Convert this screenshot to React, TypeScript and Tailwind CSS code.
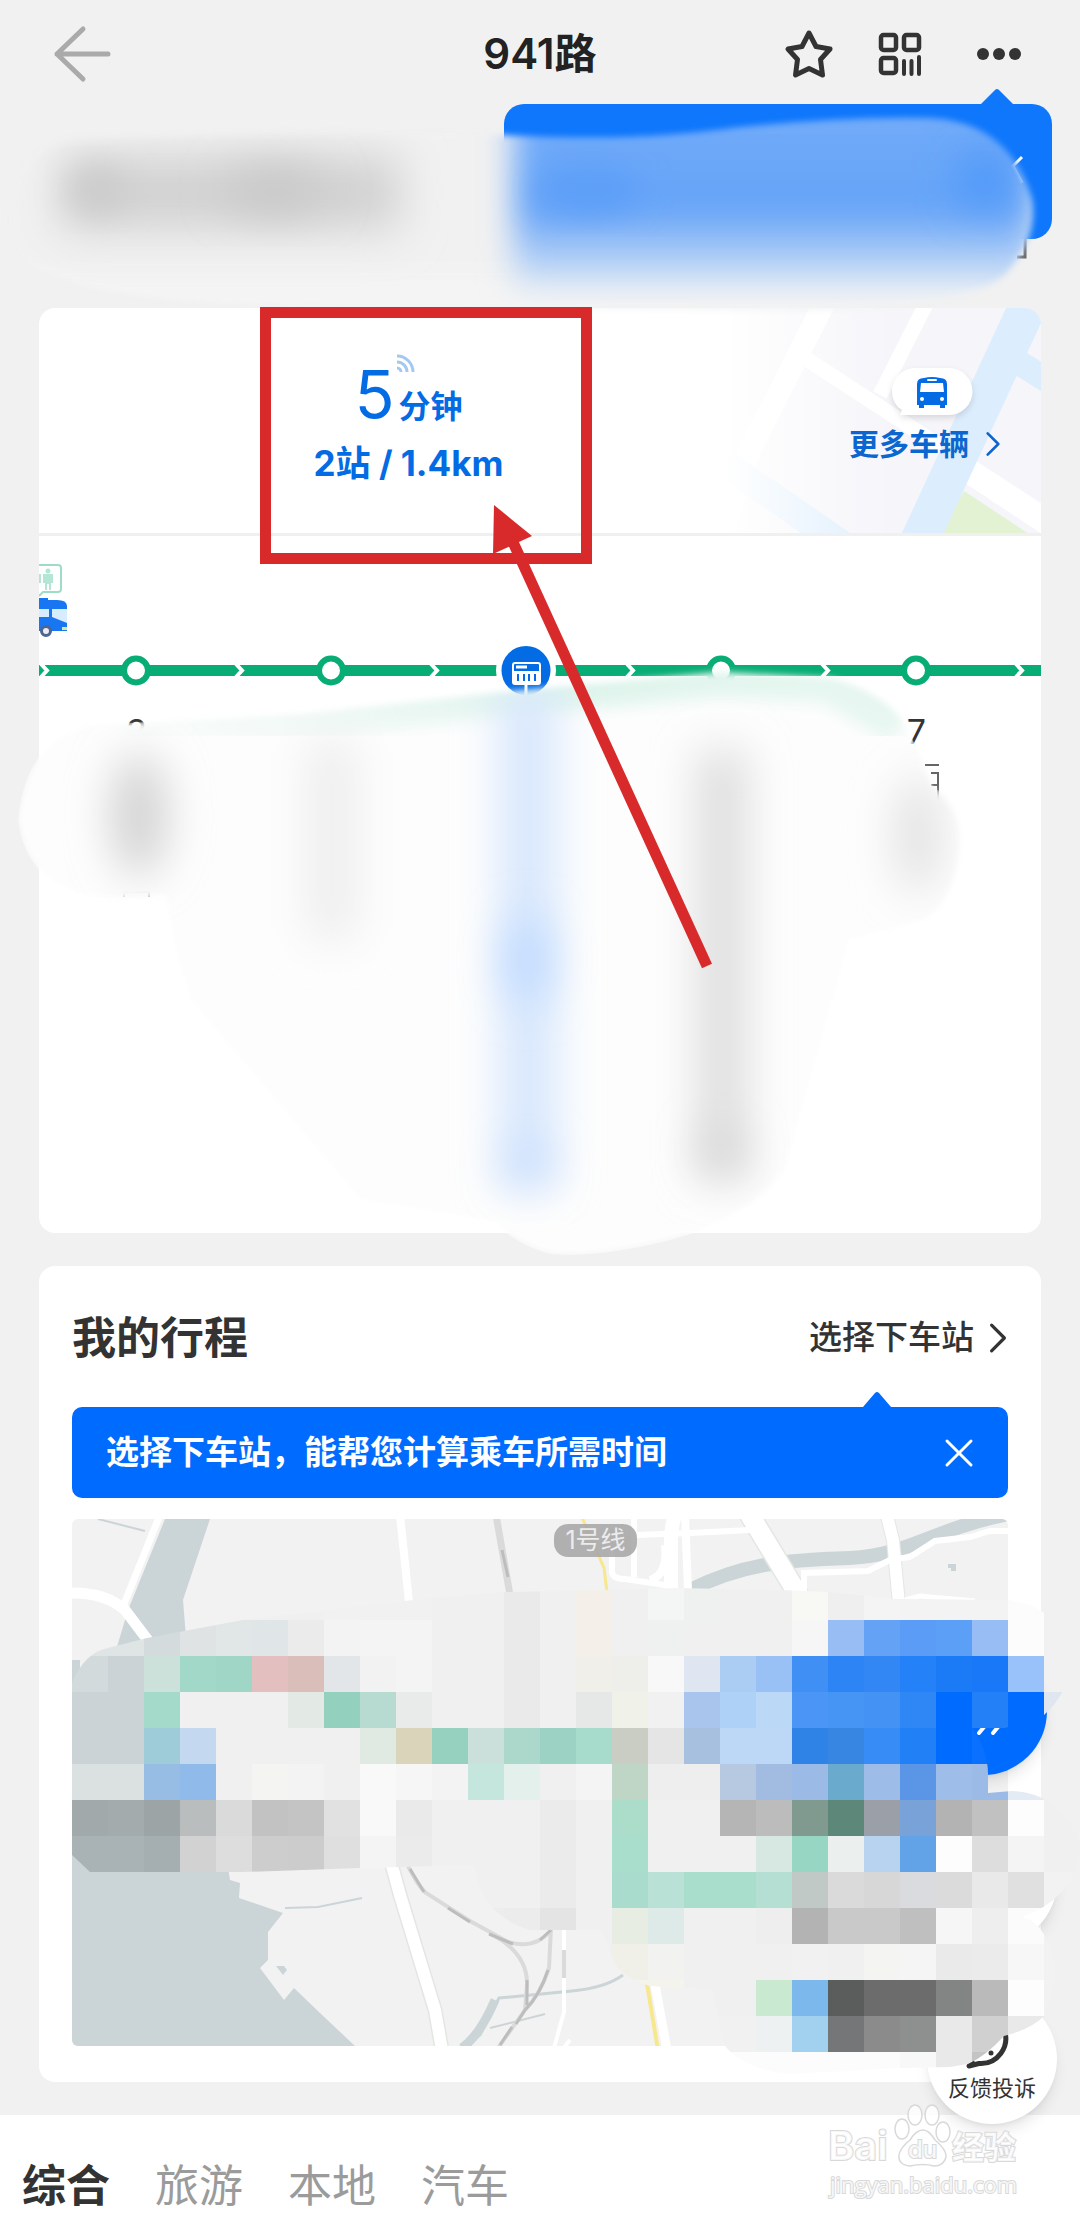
import React from "react";

const MOSAIC: [number, number, string][] = [
  [44, 2, "f0f0f0 f0f0f0 f0f0f0 f0f0f0 f0f0f0 f0f0f0 f0f0f0 f1f1f1 f1f1f1 f1f1f1 f0f0f0 f0f0f0 eaeaea f0f0f0 f4efe8 f0f0f0 f4f6f5 eff1f0 f0f0f0 f0f0f0 f8f8f5 efefef f4f4f4 f3f3f3 f3f3f3 f3f3f3 fcfcfc"],
  [45, 2, "dfe5e5 dfe5e5 d3dbdc dfe3e4 e1e6e7 e0e6e7 ebebeb f3f3f3 f4f4f4 f4f4f4 f0f0f0 f0f0f0 eaeaea f0f0f0 f4efe8 f0f0f0 eff1f0 f0f0f0 f0f0f0 f0f0f0 f6f6f6 97bdf4 64a2f5 5a9cf6 5c9ff7 97bdf4 fcfcfc"],
  [46, 2, "d3dadc cbd3d6 cde1db a2d8c7 a0d6c5 e3bfc0 d9beba e2e6e8 f2f2f2 f4f4f4 f0f0f0 f0f0f0 eaeaea f0f0f0 f0efea eeefea f8f8f8 dfe6f1 abccf3 99c1f5 3f8ff5 2d85f5 3287f5 2581f7 1b7bf7 1878f8 99c1fa"],
  [47, 2, "cbd3d6 cbd3d6 a4dac9 f0f0f0 f0f0f0 f0f0f0 e3e9e5 93d0be b7dbd0 e8ebea f0f0f0 f0f0f0 eaeaea f0f0f0 e6e8e7 f0f1e9 f1f1f1 a9c5ee aed1f8 bcd8f7 4a95f5 4694f4 4493f4 2e87f5 006cff 2380f7 006cff dfe6f0"],
  [48, 2, "cbd3d6 cbd3d6 9fccd9 c4d9ef f0f0f0 f0f0f0 f0f0f0 f0f0f0 e0e9e2 dad4bb 96d0be cce0db acd8cb 9bd2c3 a7dccc c9cdc3 e5e5e5 a8c0e0 bdd8f6 bdd8f6 2f82e6 3787e2 378cf5 2280f7 006cff 0a70ff"],
  [49, 2, "dbe1e1 dbe1e1 98bde5 8fbae9 f0f0f0 f4f4f2 f3f3f3 f0f0f0 f9f9f9 f6f6f6 f3f3f3 c5e6dd e4f0ec f0f0f0 f4f4f4 bfd6c6 eeeeee eeeeee b7c9e0 a1bbe1 9cbae6 6aaacd 9dbce7 5a95e6 9ebee9 9bbae6 e3ebf5 f0f0f0"],
  [50, 2, "a1a9aa a3abac 9ca4a5 b9bdbe dadada c2c2c2 c4c4c4 e1e1e1 f9f9f9 eaeaea f0f0f0 f0f0f0 f0f0f0 ebebeb f0f0f0 acdcca f0f0f0 f0f0f0 b5b5b5 bcbcbc 809a90 5d8779 9b9fa8 79a2d9 b3b3b3 c1c1c1 fdfdfd f0f0f0"],
  [51, 2, "a9b2b4 a9b2b4 a5aeb0 d2d2d2 dddddd cdcdcd cccccc dfdfdf f4f4f4 ebebeb f0f0f0 f0f0f0 f0f0f0 ebebeb f0f0f0 a9ddcc f0f0f0 f0f0f0 f0f0f0 d7e8e2 96d6c2 ebf0ee b8d3ef 62a2e7 fdfdfd dddddd f4f4f4 f0f0f0"],
  [52, 12, "f0f0f0 f0f0f0 f0f0f0 ebebeb f0f0f0 a9dccc bae1d6 a9ddcc a9ddcc b5dfd3 c1c9c6 dadada d7d7d7 dadbde dbdbdb e9e9e9 e0e0e0 f2f2f2"],
  [53, 12, "f0f0f0 ededed ececec e4e4e4 f0f0f0 e8ede3 ddeae8 f0f0f0 f0f0f0 eeeeee b3b3b3 c9c9c9 c9c9c9 bfbfbf f6f6f6 eeeeee fbfbfb f2f2f2"],
  [54, 16, "f0f0f0 f0efe8 f2f2f0 f0f0f0 f0f0f0 f0f0f0 f1f1f1 f0f0f0 f4f4f2 f5f5f5 eaeaea ebebeb f7f7f7 f2f2f2"],
  [55, 17, "f4f3ec f4f3ec f0f0f0 f0f0f0 c9e9d1 7db8ec 5b5d5c 6c6c6c 6c6c6c 838584 bababa fdfdfd f2f2f2"],
  [56, 19, "f1f1f1 f1f1f1 edf1f1 a2d1f0 757678 8b8b8b 8e908f e9e9e9 d0d0d0 e9e9e9"],
  [57, 19, "fcfcfc fcfcfc fcfcfc fcfcfc fcfcfc fcfcfc f8f8f8 e9e9e9 c4c4c4"],
];

const MOSAIC_OUTLINE =
  "M72 1683Q85 1652 108 1648L147 1638L243 1620L330 1610L430 1598L504 1592L612 1590L676 1588L780 1590L830 1592L895 1599L1008 1600Q1032 1603 1044 1613L1044 1656L1072 1656Q1070 1692 1044 1715L1005 1728L972 1728Q988 1750 988 1774L988 1793L1012 1791Q1040 1792 1060 1810Q1080 1832 1080 1850Q1072 1900 1022 1917Q1034 1920 1041 1930Q1056 1950 1055 1980L1044 2016Q1030 2030 1004 2036Q986 2056 968 2064L950 2067L900 2068L790 2074Q745 2070 725 2046L712 1990L650 1986Q612 1975 608 1945L600 1930L530 1930Q480 1915 475 1865L360 1868L216 1873L90 1872L72 1855Z";

const SMEAR =
  "M18 820Q25 740 90 725L300 714L500 692L720 672L830 678Q880 690 904 722L920 755L932 785Q964 810 960 850Q955 900 925 920L850 940L805 1100L785 1170Q745 1225 650 1245Q590 1258 550 1254Q515 1245 495 1222L360 1200L190 1000L175 950L165 895Q30 915 18 820Z";

const TOP_SMEAR =
  "M10 240Q0 150 80 138L300 132L480 134C600 140 660 138 740 127Q850 116 930 118Q1010 122 1032 200Q1038 240 1005 275Q975 306 800 310L300 306Q30 302 10 240Z";

function Chevron({ className }: { className: string }) {
  return (
    <svg viewBox="0 0 18 30" className={className} fill="none" stroke="currentColor" strokeWidth="3" strokeLinecap="round" strokeLinejoin="round" aria-hidden="true">
      <path d="M3 3L15 15L3 27" />
    </svg>
  );
}

function Header() {
  return (
    <header className="relative flex h-27 items-center justify-between pr-14 pl-13 text-[#333]">
      <button aria-label="返回" className="text-[#aaa]">
        <svg viewBox="0 0 60 60" className="size-15" fill="none" stroke="currentColor" strokeWidth="5" strokeLinecap="round" strokeLinejoin="round">
          <path d="M31 5L5 30L31 55M5 30H56" />
        </svg>
      </button>
      <h1 className="pointer-events-none absolute inset-x-0 text-center text-[42px] leading-none font-semibold text-[#222]">941路</h1>
      <div className="flex items-center gap-11">
        <button aria-label="收藏">
          <svg viewBox="0 0 50 50" className="size-[50px]" fill="none" stroke="currentColor" strokeWidth="5" strokeLinejoin="round">
            <path d="M25 4L32 17.500L46 20L36.500 30.500L38.500 46L25 39.500L11.500 46L13.500 30.500L4 20L18 17.500Z" />
          </svg>
        </button>
        <button aria-label="乘车码">
          <svg viewBox="0 0 44 44" className="size-11" fill="none" stroke="currentColor" strokeWidth="4.500">
            <rect x="3" y="3" width="15" height="15" rx="2.500" />
            <rect x="26" y="3" width="15" height="15" rx="2.500" />
            <rect x="3" y="26" width="15" height="15" rx="2.500" />
            <path d="M26 29V42M33.500 29V42M41 25V42" strokeLinecap="round" strokeWidth="4" />
          </svg>
        </button>
        <button aria-label="更多" className="ml-2">
          <svg viewBox="0 0 50 50" className="size-[50px]" fill="currentColor">
            <circle cx="9" cy="25" r="6" />
            <circle cx="25" cy="25" r="6" />
            <circle cx="41" cy="25" r="6" />
          </svg>
        </button>
      </div>
    </header>
  );
}

function MoreVehicles() {
  return (
    <button className="relative h-full w-[341px] overflow-hidden text-[#0c66d0]">
      <svg viewBox="0 0 350 225" preserveAspectRatio="xMaxYMid slice" className="absolute inset-0 size-full" aria-hidden="true">
        <defs>
          <linearGradient id="fade" x1="0" x2="1">
            <stop offset="0" stopColor="#fff" />
            <stop offset="0.1" stopColor="#fff" />
            <stop offset="0.6" stopColor="#fff" stopOpacity="0" />
          </linearGradient>
        </defs>
        <rect width="350" height="225" fill="#f5f5fa" />
        <g transform="translate(9 -8)" fill="none" stroke="#fff">
          <path d="M126 0L50 150L20 240" strokeWidth="22" />
          <path d="M105 58L350 218" strokeWidth="15" />
          <path d="M228 0L180 95" strokeWidth="15" />
          <path d="M20 160L150 250" stroke="#dcedfd" strokeWidth="28" />
          <path d="M270 175L350 228" strokeWidth="19" />
          <path d="M264 191L329 234L240 234Z" fill="#e2f2d2" stroke="none" />
          <path d="M340 -20L215 250" stroke="#dcedfd" strokeWidth="38" />
          <path d="M318 62L350 82" stroke="#dcedfd" strokeWidth="25" />
        </g>
        <rect width="350" height="225" fill="url(#fade)" />
      </svg>
      <span className="absolute top-[58px] right-[63px] block">
        <svg viewBox="0 0 92 62" className="h-[62px] w-[92px] drop-shadow-md" aria-hidden="true">
          <path d="M29 2H63A23 23 0 0 1 63 49H14L16 44Q6 38 6 25A23 23 0 0 1 29 2Z" fill="#fff" />
          <path d="M31 18Q31 12 38 12Q46 10 54 12Q61 12 61 18V39H59V42H54V39H38V42H33V39H31Z" fill="#036be3" />
          <path d="M35 17H57L58 26H34Z" fill="#fff" />
          <rect x="41" y="13" width="10" height="2" rx="1" fill="#fff" />
          <circle cx="36" cy="33" r="2" fill="#fff" />
          <circle cx="56" cy="33" r="2" fill="#fff" />
        </svg>
      </span>
      <span className="absolute top-[118px] right-10 flex items-center gap-4 text-[30px] leading-9 font-bold">
        更多车辆
        <Chevron className="h-7 w-4" />
      </span>
    </button>
  );
}

const STOPS = [
  { n: "3", current: false },
  { n: "4", current: false },
  { n: "5", current: true },
  { n: "6", current: false },
  { n: "7", current: false },
];

function RouteLine() {
  return (
    <div className="relative min-h-[697px] overflow-hidden">
      <svg viewBox="39 536 1002 200" className="block w-full" aria-hidden="true">
        <g fill="none" stroke="#9fdcc6" strokeWidth="2">
          <path d="M36 565H58Q61 565 61 568V589Q61 592 58 592H43L39 596" />
        </g>
        <g fill="#b4e6d5">
          <circle cx="48" cy="571" r="2.500" />
          <path d="M43 574H53V583H51V590H49V584H47V590H45V583H43Z" />
          <path d="M39 574H41V583H39Z" />
        </g>
        <path d="M39 598H48V600H57Q67 600 67 606V631H39Z" fill="#1876f2" />
        <path d="M39 609H49V617H39ZM52 609H67V623L52 617Z" fill="#d6edfd" />
        <path d="M62 627H67V630H62Z" fill="#d5ec9a" />
        <circle cx="46" cy="631" r="4.500" fill="#e8ecf5" stroke="#4f6490" strokeWidth="3" />
        <path d="M39 670.500H1041" stroke="#08ad76" strokeWidth="11" />
        {[44, 239, 434, 630, 825, 1019].map((x) => (
          <path key={x} d={`M${x - 3} 664L${x + 3} 670.500L${x - 3} 677`} fill="none" stroke="#fff" strokeWidth="4" />
        ))}
        {[136, 331, 721, 916].map((x) => (
          <circle key={x} cx={x} cy="670.500" r="12" fill="#fff" stroke="#08ad76" strokeWidth="6" />
        ))}
        <circle cx="526" cy="670.500" r="30" fill="#fff" />
        <circle cx="526" cy="670.500" r="24.500" fill="#036be3" />
        <rect x="513" y="663" width="27" height="21" rx="2" fill="none" stroke="#fff" strokeWidth="2" />
        <path d="M513 671H540V684H513Z" fill="#fff" />
        <path d="M516 667H527M526 684V696" stroke="#fff" strokeWidth="3" />
        <path d="M518 674V681M524 674V681M529 674V681M535 674V681" stroke="#036be3" strokeWidth="2" />
      </svg>
      <ol className="absolute top-[176px] left-0 grid w-[97.3%] grid-cols-5 text-center text-[34px] leading-10 text-[#333]">
        {STOPS.map((s) => (
          <li key={s.n} className={s.current ? "text-[#036be3]" : ""}>{s.n}</li>
        ))}
      </ol>
    </div>
  );
}

function ArrivalCard() {
  return (
    <section className="mx-[39px] overflow-hidden rounded-2xl bg-white">
      <div className="flex h-[228px] border-b-3 border-[#f0f0f0]">
        <div className="relative flex flex-1 flex-col items-center pt-11 pl-[78px] text-[#036be3]">
          <p className="relative flex items-baseline gap-1 text-[32px] font-bold">
            <span className="text-[66px] leading-[84px] font-normal">5</span>分钟
            <svg viewBox="0 0 18 18" className="absolute top-0.5 left-[43px] size-[18px]" fill="none" stroke="#a5c8f0" strokeWidth="3" aria-hidden="true">
              <path d="M0 2A16 16 0 0 1 16 18M0 8A10 10 0 0 1 10 18M0 14A4 4 0 0 1 4 18" />
            </svg>
          </p>
          <p className="text-[35px] leading-[54px] font-bold whitespace-nowrap">2站 / 1.4km</p>
        </div>
        <MoreVehicles />
      </div>
      <RouteLine />
    </section>
  );
}

function RouteMap() {
  return (
    <svg viewBox="72 1519 936 527" className="mt-[21px] block w-full rounded-md bg-[#f2f2f2]" role="img" aria-label="线路地图">
      <g fill="#cbd5d7">
        <path d="M165 1519H210L183 1600L187 1650H116L128 1610Z" />
        <path d="M72 1660H80V1855H226L230 1880L240 1883L239 1898L283 1913L268 1932V1960L260 1968L284 2000L294 1988L320 2013L355 2046H72Z" />
        <path d="M276 1966H284L287 1970L283 1975Z" />
        <path d="M948 1564H956V1571H951V1568H948Z" />
      </g>
      <g fill="none" stroke="#cbd5d7">
        <path d="M98 1519L145 1531" strokeWidth="2" />
        <path d="M690 1590C740 1565 780 1560 850 1558C910 1555 930 1530 1008 1514" strokeWidth="14" />
        <path d="M460 2050L480 2035L499 1998L572 1991Q605 1988 623 1975" strokeWidth="3" />
        <path d="M462 2048Q480 2035 495 2000" strokeWidth="9" />
        <path d="M490 2028L545 2014M285 1908L318 1907L362 1898" strokeWidth="2" />
      </g>
      <g fill="none" stroke="#e3e7e2">
        <path d="M392 1866L400 1895L435 2010L442 2050" strokeWidth="15" />
        <path d="M748 1512L799 1596" strokeWidth="22" />
        <path d="M886 1512L893 1540L899 1604" strokeWidth="14" />
      </g>
      <g fill="none" stroke="#fff">
        <path d="M160 1515L124 1604" strokeWidth="7" />
        <path d="M70 1593Q105 1592 125 1610L150 1643" strokeWidth="11" />
        <path d="M400 1515L409 1602" strokeWidth="8" />
        <path d="M392 1866L400 1895L435 2010L442 2050" strokeWidth="12" />
        <path d="M637 1535L690 1533L750 1530M634 1519V1577M612 1550V1572Q613 1579 625 1579L665 1585" strokeWidth="6" />
        <path d="M675 1515Q670 1530 671 1550V1590" strokeWidth="14" />
        <path d="M685 1515L688 1590M665 1545Q668 1575 650 1580" strokeWidth="8" />
        <path d="M748 1512L799 1596" strokeWidth="19" />
        <path d="M804 1595V1573L868 1571L890 1560L910 1557L935 1541L970 1537L990 1531H1010" strokeWidth="6" />
        <path d="M886 1512L893 1540L899 1604" strokeWidth="12" />
        <path d="M905 1600L920 1596L975 1601" strokeWidth="5" />
        <path d="M655 1984L667 2050" strokeWidth="9" />
        <path d="M564 1928V2012L554 2048M570 2040L562 2050" strokeWidth="4" />
      </g>
      <g fill="none" stroke="#dadada" strokeWidth="4">
        <path d="M496 1515L510 1595" strokeWidth="7" />
        <path d="M408 1866Q418 1886 426 1893L470 1921L508 1942Q535 1950 551 1930" />
        <path d="M495 1936Q528 1955 527 1985L525 2010M551 1928L549 1968Q540 1995 525 2010L498 2048" />
        <path d="M564 1950V1978" />
      </g>
      <g fill="none" stroke="#bdbdbd" strokeWidth="3">
        <path d="M502 1550L508 1577M410 1869L424 1892M448 1908L470 1922M489 1934L513 1944M540 1940L551 1930M527 1980V2005M548 1970Q540 1995 525 2010L516 2024M512 2027L500 2045" />
      </g>
      <g fill="none" stroke="#f7e88e">
        <path d="M581 1515L604 1568L607 1592" strokeWidth="3" />
        <path d="M647 1984L658 2050" strokeWidth="4" />
      </g>
      <rect x="554" y="1524" width="83" height="33" rx="14" fill="#a5a5a5" fillOpacity="0.850" />
      <text x="595.500" y="1549" textAnchor="middle" fontSize="25" fill="#ececec">1号线</text>
    </svg>
  );
}

function TripCard() {
  return (
    <section className="mx-[39px] mt-[33px] rounded-2xl bg-white px-[33px] pt-10 pb-9">
      <div className="flex h-16 items-center justify-between text-[#333]">
        <h2 className="text-[44px] leading-none font-bold">我的行程</h2>
        <button className="flex items-center gap-3.5 text-[33px] font-medium">
          选择下车站
          <Chevron className="h-8 w-5" />
        </button>
      </div>
      <div className="relative mt-[37px] flex h-[91px] items-center justify-between rounded-[10px] bg-[#006cff] pr-8 pl-[34px] text-white">
        <svg viewBox="0 0 28 16" className="absolute -top-4 right-[117px] h-4 w-7" aria-hidden="true">
          <path d="M0 16L12 2Q14 0 16 2L28 16Z" fill="#006cff" />
        </svg>
        <p className="text-[33px] font-bold">选择下车站，能帮您计算乘车所需时间</p>
        <button aria-label="关闭">
          <svg viewBox="0 0 34 34" className="size-[34px]" fill="none" stroke="currentColor" strokeWidth="3" strokeLinecap="round">
            <path d="M5 5L29 29M29 5L5 29" />
          </svg>
        </button>
      </div>
      <RouteMap />
    </section>
  );
}

function Floating() {
  return (
    <>
      <button aria-label="展开" className="absolute top-[1647px] right-[33px] size-32 rounded-full bg-[#006cff] shadow-lg">
        <svg viewBox="0 0 128 128" className="size-full" fill="none" stroke="#fff" strokeWidth="4" strokeLinecap="round">
          <path d="M60 86L65 80M74 86L79 80" />
        </svg>
      </button>
      <button aria-label="刷新" className="absolute top-[1817px] right-[23px] size-32 rounded-full bg-white shadow-lg" />
      <button className="absolute top-[1994px] right-[23px] flex size-[130px] flex-col items-center rounded-full bg-white pt-[22px] text-[22px] leading-6 text-[#333] shadow-lg">
        <svg viewBox="0 0 60 60" className="size-15 shrink-0" fill="none" stroke="currentColor" strokeWidth="5" strokeLinejoin="round" aria-hidden="true">
          <path d="M7 50L10 46A25 25 0 1 1 17 47.500L7 50Z" />
          <circle cx="29" cy="37" r="2.500" fill="currentColor" stroke="none" />
        </svg>
        反馈投诉
      </button>
    </>
  );
}

function Tabs() {
  return (
    <nav className="mt-[33px] flex h-[105px] items-center gap-[45px] bg-white px-[22px] pt-9 text-[44px] leading-none text-[#9b9b9b]">
      <a href="#all" className="font-bold text-[#333]">综合</a>
      <a href="#travel">旅游</a>
      <a href="#local">本地</a>
      <a href="#car">汽车</a>
    </nav>
  );
}

function Overlay() {
  return (
    <svg viewBox="0 0 1080 2220" className="pointer-events-none absolute top-0 left-0 w-full" aria-hidden="true">
      <defs>
        <filter id="b3" x="-20%" y="-20%" width="140%" height="140%"><feGaussianBlur stdDeviation="3" /></filter>
        <filter id="b8" x="-20%" y="-20%" width="140%" height="140%"><feGaussianBlur stdDeviation="8" /></filter>
        <filter id="b16" x="-50%" y="-50%" width="200%" height="200%"><feGaussianBlur stdDeviation="16" /></filter>
        <filter id="b24" x="-150%" y="-80%" width="400%" height="260%"><feGaussianBlur stdDeviation="22" /></filter>
        <linearGradient id="blueFade" x1="0" y1="100" x2="0" y2="300" gradientUnits="userSpaceOnUse">
          <stop offset="0" stopColor="#74acf9" />
          <stop offset="0.55" stopColor="#64a3f8" />
          <stop offset="0.78" stopColor="#a9cbf6" />
          <stop offset="1" stopColor="#eef2f7" />
        </linearGradient>
        <linearGradient id="greenFade" x1="0" x2="1">
          <stop offset="0" stopColor="#e4f5ee" stopOpacity="0" />
          <stop offset="0.6" stopColor="#dff4ec" />
          <stop offset="1" stopColor="#e8f7f1" />
        </linearGradient>
        <mask id="topMask"><path d={TOP_SMEAR} fill="#fff" filter="url(#b3)" /></mask>
        <mask id="stopMask"><path d={SMEAR} fill="#fff" filter="url(#b3)" /></mask>
        <clipPath id="mosaicClip"><path d={MOSAIC_OUTLINE} /></clipPath>
      </defs>

      <path d="M1022 157L1013 166L1022 183" fill="none" stroke="#fff" strokeWidth="3" />
      <path d="M1025 239V257H1017" fill="none" stroke="#666" strokeWidth="3" />
      <g mask="url(#topMask)">
        <rect width="1080" height="320" fill="#f1f1f1" />
        <rect x="20" y="280" width="1020" height="40" fill="#f5f5f5" filter="url(#b16)" />
        <rect x="60" y="155" width="340" height="75" fill="#d2d2d2" filter="url(#b24)" />
        <ellipse cx="98" cy="190" rx="28" ry="22" fill="#cbcbcb" filter="url(#b16)" />
        <ellipse cx="275" cy="190" rx="50" ry="22" fill="#c8c8c8" filter="url(#b24)" />
        <rect x="514" y="80" width="520" height="205" fill="url(#blueFade)" filter="url(#b16)" />
        <ellipse cx="985" cy="180" rx="26" ry="28" fill="#4996f9" filter="url(#b24)" />
        <ellipse cx="590" cy="190" rx="50" ry="22" fill="#5b9ef8" filter="url(#b16)" />
      </g>

      <path d="M925 765H939M931 773H938V800M931 785H938" fill="none" stroke="#666" strokeWidth="2" />
      <path d="M124 897V892H149V897" fill="none" stroke="#aaa" strokeWidth="2" />
      <g mask="url(#stopMask)">
        <path d={SMEAR} fill="#fdfdfd" />
        <path d="M90 725L300 714L500 692L720 672L830 678L904 722" fill="none" stroke="url(#greenFade)" strokeWidth="50" filter="url(#b8)" />
        <ellipse cx="139" cy="815" rx="28" ry="62" fill="#d2d2d2" filter="url(#b24)" />
        <rect x="308" y="740" width="48" height="200" fill="#ededed" filter="url(#b24)" />
        <rect x="500" y="685" width="56" height="500" fill="#d6e6fd" filter="url(#b24)" />
        <ellipse cx="527" cy="960" rx="20" ry="45" fill="#bcd8ff" filter="url(#b24)" />
        <ellipse cx="527" cy="1165" rx="20" ry="22" fill="#c5dcfc" filter="url(#b24)" />
        <rect x="697" y="750" width="50" height="430" fill="#dddddd" filter="url(#b24)" />
        <ellipse cx="722" cy="1150" rx="20" ry="22" fill="#d6d6d6" filter="url(#b24)" />
        <ellipse cx="918" cy="835" rx="24" ry="60" fill="#e2e2e2" filter="url(#b24)" />
      </g>

      <g clipPath="url(#mosaicClip)" shapeRendering="crispEdges">
        {MOSAIC.map(([row, start, colors]) =>
          colors.split(" ").map((c, i) => (
            <rect key={`${row}-${i}`} x={(start + i) * 36} y={row * 36} width="36" height="36" fill={`#${c}`} />
          )),
        )}
      </g>

      <rect x="265.500" y="312.500" width="321" height="246" fill="none" stroke="#d92a2b" strokeWidth="11" />
      <path d="M707 966L512 540" stroke="#d92a2b" strokeWidth="11" />
      <path d="M494 505L532 536L493 554Z" fill="#d92a2b" />

      <g fill="#fff" fillOpacity="0.800" stroke="#d9d9d9" strokeWidth="1.500">
        <ellipse cx="902" cy="2129" rx="7" ry="10" />
        <ellipse cx="915" cy="2115" rx="7" ry="10" />
        <ellipse cx="932" cy="2115" rx="7" ry="10" />
        <ellipse cx="943" cy="2132" rx="7" ry="10" />
        <path d="M923 2130Q929 2130 935 2140Q947 2150 946 2157Q944 2166 934 2166Q923 2163 910 2166Q898 2165 899 2155Q900 2148 910 2140Q916 2130 923 2130Z" />
        <g style={{ paintOrder: "stroke" }} strokeWidth="2">
          <text x="828" y="2160" fontSize="40" fontWeight="600">Bai</text>
          <text x="908" y="2158" fontSize="24" fontWeight="500">du</text>
          <text x="952" y="2159" fontSize="32" fontWeight="700">经验</text>
          <text x="830" y="2193" fontSize="22" fontFamily="Open Sans">jingyan.baidu.com</text>
        </g>
      </g>
    </svg>
  );
}

export default function App() {
  return (
    <div className="relative min-h-screen overflow-hidden bg-[#f1f1f1] font-['Inter','Noto_Sans_CJK_SC',sans-serif]">
      <Header />
      <div className="relative h-50">
        <div className="absolute -top-1 right-7 h-[135px] w-[548px] rounded-[20px] bg-[#0f77fb]">
          <svg viewBox="0 0 34 17" className="absolute -top-4 right-[38px] h-[17px] w-[34px]" aria-hidden="true">
            <path d="M0 17L15 2Q17 0 19 2L34 17Z" fill="#0f77fb" />
          </svg>
        </div>
      </div>
      <ArrivalCard />
      <TripCard />
      <Tabs />
      <Floating />
      <Overlay />
    </div>
  );
}
